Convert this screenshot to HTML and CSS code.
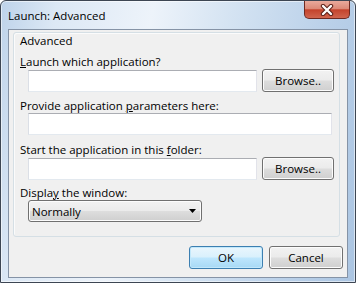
FILE: index.html
```html
<!DOCTYPE html>
<html>
<head>
  <meta http-equiv="Content-type" content="text/html; charset=utf-8">
  <title>Launch: Advanced</title>
  <link rel="stylesheet" href="styles.css">
</head>
<body>
  <div class="window">
    <div class="titlebar">
      <span class="title">Launch: Advanced</span>
      <div class="close">
        <svg width="14" height="12" viewBox="0 0 14 12">
          <path d="M3 2 L11 10 M11 2 L3 10" stroke="#5a2018" stroke-width="4.4" stroke-linecap="round"/>
          <path d="M3 2 L11 10 M11 2 L3 10" stroke="#ffffff" stroke-width="2.4" stroke-linecap="round"/>
        </svg>
      </div>
    </div>
    <div class="client">
      <div class="group">
        <div class="group_title">Advanced</div>
        <div class="label"><u>L</u>aunch which application?</div>
        <div class="row">
          <input class="textbox short" type="text">
          <button class="button browse">Browse..</button>
        </div>
        <div class="label">Provide application <u>p</u>arameters here:</div>
        <input class="textbox long" type="text">
        <div class="label tall_gap">Start the application in this <u>f</u>older:</div>
        <div class="row">
          <input class="textbox short" type="text">
          <button class="button browse">Browse..</button>
        </div>
        <div class="label small_gap">Displa<u>y</u> the window:</div>
        <div class="combo">
          <span>Normally</span>
          <svg width="7" height="4" viewBox="0 0 7 4"><path d="M0 0 H7 L3.5 4 Z" fill="#000"/></svg>
        </div>
      </div>
      <div class="actions">
        <button class="button default">OK</button>
        <button class="button">Cancel</button>
      </div>
    </div>
  </div>
</body>
</html>
```

FILE: styles.css
```css
body {
  margin: 0;
  font-family: "Open Sans", "Noto Sans", sans-serif;
  font-size: 11.5px;
  color: #000;
  background: #fff;
}
.window {
  width: 356px;
  height: 283px;
  box-sizing: border-box;
  border: 1px solid #3d4653;
  border-radius: 6px 6px 0 0;
  background: linear-gradient(100deg, #bed3ea 0%, #dce8f5 14%, #edf3fa 38%, #d4e3f2 58%, #bcd2ea 80%, #abc5e2 100%);
  box-shadow: inset 0 0 0 1px rgba(255, 255, 255, 0.55);
  padding: 0 7px 4px 7px;
  display: flex;
  flex-direction: column;
}
.titlebar {
  height: 28px;
  display: flex;
  justify-content: space-between;
  align-items: flex-start;
}
.title {
  padding-top: 7px;
  line-height: 15px;
}
.close {
  width: 44px;
  height: 17px;
  margin-right: -2px;
  border: 1px solid #6e2a22;
  border-top: none;
  border-radius: 0 0 5px 5px;
  background: linear-gradient(#e9aa9c, #dc8a78 45%, #c4432c 52%, #d0654e 100%);
  display: flex;
  align-items: center;
  justify-content: center;
}
.client {
  flex: 1;
  background: #f0f0f0;
  border: 1px solid #8593a6;
  display: flex;
  flex-direction: column;
}
.group {
  margin: 2px 7px 0 4px;
  border: 1px solid #d5dfe5;
  border-radius: 3px;
  box-shadow: inset 1px 1px #fbfbfb;
  padding: 0 0 14px 6px;
}
.group_title {
  line-height: 15px;
}
.label {
  line-height: 15px;
  margin-top: 6px;
}
.tall_gap {
  margin-top: 7px;
}
.small_gap {
  margin-top: 5px;
}
.row {
  display: flex;
  align-items: center;
  height: 23px;
  margin-left: 8px;
}
.textbox {
  display: block;
  box-sizing: border-box;
  height: 22px;
  margin: 0;
  padding: 0 3px;
  background: #fff;
  border: 1px solid;
  border-color: #abadb3 #e2e3ea #e3e9ef #dbdfe6;
  font: inherit;
  outline: none;
}
.short {
  width: 229px;
}
.long {
  width: 304px;
  margin-left: 8px;
}
.button {
  box-sizing: border-box;
  height: 23px;
  width: 74px;
  margin: 0;
  padding: 0;
  border: 1px solid #707070;
  border-radius: 3px;
  background: linear-gradient(#f2f2f2 0%, #ebebeb 48%, #dddddd 52%, #cfcfcf 100%);
  box-shadow: inset 0 0 0 1px #fcfcfc;
  font: inherit;
  color: #000;
}
.browse {
  width: 72px;
  margin-left: 5px;
}
.default {
  border-color: #3c7fb1;
  background: linear-gradient(#eaf6fd 0%, #d9f0fc 48%, #bee6fd 52%, #a7d9f5 100%);
  box-shadow: inset 0 0 0 1px #c2e8fb;
}
.combo {
  box-sizing: border-box;
  width: 174px;
  height: 22px;
  margin-left: 8px;
  padding: 0 5px 0 3px;
  border: 1px solid #707070;
  border-radius: 3px;
  background: linear-gradient(#f2f2f2 0%, #ebebeb 48%, #dddddd 52%, #cfcfcf 100%);
  box-shadow: inset 0 0 0 1px #fcfcfc;
  display: flex;
  align-items: center;
  justify-content: space-between;
}
.actions {
  display: flex;
  justify-content: flex-end;
  gap: 6px;
  margin: 9px 4px 0 0;
}
```
